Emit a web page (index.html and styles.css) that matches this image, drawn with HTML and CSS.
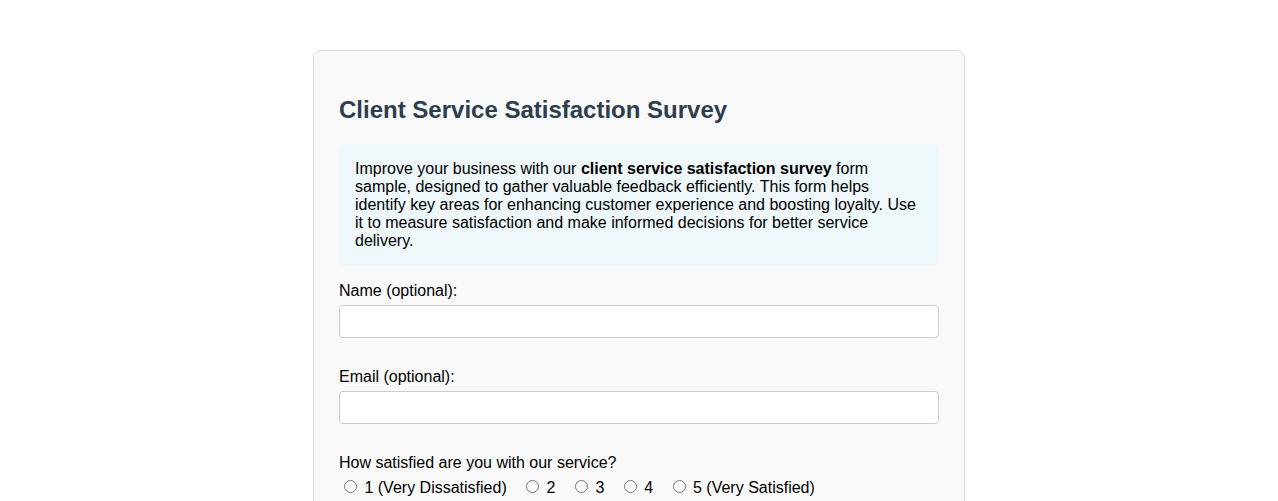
FILE: index.html
```html
<!DOCTYPE html>
<html lang="en">
<head>
<meta charset="utf-8">
<title>Client Service Satisfaction Survey</title>
<link rel="stylesheet" href="styles.css">
</head>
<body>
<div class="container">
  <h2 class="title">Client Service Satisfaction Survey</h2>
  <div class="intro">
    Improve your business with our <strong>client service satisfaction survey</strong> form sample, designed to gather valuable feedback efficiently. This form helps identify key areas for enhancing customer experience and boosting loyalty. Use it to measure satisfaction and make informed decisions for better service delivery.
  </div>
  <form class="form">
    <div class="group">
      <label class="field-label" for="name">Name (optional):</label>
      <input class="text-input" type="text" id="name">
    </div>
    <div class="group">
      <label class="field-label" for="email">Email (optional):</label>
      <input class="text-input" type="email" id="email">
    </div>
    <div class="group">
      <div class="field-label">How satisfied are you with our service?</div>
      <div class="radios">
        <label class="radio"><input type="radio" name="sat" value="1"> 1 (Very Dissatisfied)</label>
        <label class="radio"><input type="radio" name="sat" value="2"> 2</label>
        <label class="radio"><input type="radio" name="sat" value="3"> 3</label>
        <label class="radio"><input type="radio" name="sat" value="4"> 4</label>
        <label class="radio"><input type="radio" name="sat" value="5"> 5 (Very Satisfied)</label>
      </div>
    </div>
  </form>
</div>
</body>
</html>
```
FILE: styles.css
```css
html, body {
  margin: 0;
  padding: 0;
  background: #ffffff;
}
body {
  font-family: "Liberation Sans", Arial, sans-serif;
  font-size: 16px;
  color: #000;
  padding-top: 50px;
}
.container {
  width: 600px;
  margin: 0 auto;
  padding: 25px;
  background: #f9f9f9;
  border: 1px solid #dddddd;
  border-radius: 8px;
}
.title {
  font-size: 24px;
  font-weight: bold;
  color: #2c3e50;
  margin: 0.83em 0;
}
.intro {
  background: #eef7fa;
  padding: 16px;
  border-radius: 5px;
  margin-bottom: 16px;
  line-height: 18px;
}
.group {
  margin-bottom: 30px;
}
.field-label {
  display: block;
  margin-bottom: 5px;
}
.text-input {
  display: block;
  box-sizing: border-box;
  width: 100%;
  height: 33px;
  padding: 8px;
  border: 1px solid #cccccc;
  border-radius: 4px;
  background: #fff;
  font-family: inherit;
  font-size: 14px;
}
.radio {
  margin-right: 10px;
}
.radio input {
  margin: 3px 3px 0 5px;
}
```
